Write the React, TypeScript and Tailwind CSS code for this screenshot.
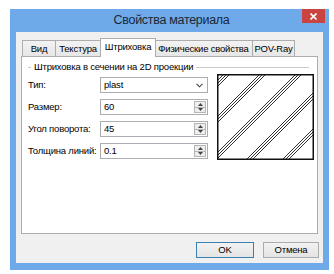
import React from "react";

const Hatch = () => {
  const groups = [10, 46, 82, 118, 154];
  const lines: number[] = [];
  groups.forEach((c) => {
    lines.push(c - 3, c, c + 3);
  });
  return (
    <svg width="97" height="86" viewBox="0 0 97 86" className="block">
      <rect x="0" y="0" width="97" height="86" fill="white" />
      {lines.map((c, i) => (
        <line key={i} x1={c} y1={0} x2={c - 86} y2={86} stroke="#1a1a1a" strokeWidth="0.9" />
      ))}
      <rect x="0.75" y="0.75" width="95.5" height="84.5" fill="none" stroke="#111" strokeWidth="1.5" />
    </svg>
  );
};

const txt = "text-[9.5px] tracking-[-0.2px] text-black leading-none whitespace-nowrap";

const Spin = ({ value }: { value: string }) => (
  <div className={"relative w-[108px] h-[16px] bg-white border border-[#abadb3] flex items-center pl-[3px] " + txt}>
    {value}
    <div className="absolute right-[1px] top-[1px] bottom-[1px] w-[12px] flex flex-col border border-[#b5b5b5] bg-[#eeeeee]">
      <div className="flex-1 flex items-center justify-center border-b border-[#b5b5b5]">
        <svg width="5" height="3" viewBox="0 0 5 3"><path d="M0 3 L2.5 0 L5 3 Z" fill="#444" /></svg>
      </div>
      <div className="flex-1 flex items-center justify-center">
        <svg width="5" height="3" viewBox="0 0 5 3"><path d="M0 0 L2.5 3 L5 0 Z" fill="#444" /></svg>
      </div>
    </div>
  </div>
);

const Label = ({ children }: { children: React.ReactNode }) => (
  <div className={"w-[72px] h-[16px] flex items-center " + txt}>{children}</div>
);

export default function App() {
  const tabs = [
    { t: "Вид", w: 34 },
    { t: "Текстура", w: 46 },
    { t: "Штриховка", w: 56, sel: true },
    { t: "Физические свойства", w: 99 },
    { t: "POV-Ray", w: 43 },
  ];
  return (
    <div className="w-[334px] h-[274px] bg-white overflow-hidden font-['Liberation_Sans',Arial,sans-serif]">
      <div className="ml-[10px] mt-[9px] w-[319px] h-[261px] bg-[#6eaaea] flex flex-col">
        <div className="relative h-[23px] flex items-center justify-center">
          <span className="text-[12.5px] tracking-[-0.3px] text-[#1b2735] leading-none ml-[4px] whitespace-nowrap">Свойства материала</span>
          <div className="absolute top-0 right-[4px] w-[23px] h-[14px] bg-[#c9443e] flex items-center justify-center">
            <svg width="7" height="7" viewBox="0 0 7 7">
              <path d="M0.5 0.5 L6.5 6.5 M6.5 0.5 L0.5 6.5" stroke="white" strokeWidth="1.6" />
            </svg>
          </div>
        </div>
        <div className="mx-[6px] mb-[7px] flex-1 bg-[#f0f0f0] flex flex-col px-[5px]">
          <div className="mt-[6px] h-[18px] flex items-end pl-[1px] relative z-10">
            {tabs.map((tab) =>
              tab.sel ? (
                <div
                  key={tab.t}
                  className={"h-[19px] mb-[-1px] bg-white border border-b-0 border-[#adadad] flex items-center justify-center -mx-[1px] relative z-10 " + txt}
                  style={{ width: tab.w }}
                >
                  <span className="-mt-[2px]">{tab.t}</span>
                </div>
              ) : (
                <div
                  key={tab.t}
                  className={"h-[16px] bg-gradient-to-b from-[#f3f3f3] to-[#e6e6e6] border border-b-0 border-[#adadad] -ml-[1px] first:ml-0 flex items-center justify-center " + txt}
                  style={{ width: tab.w }}
                >
                  {tab.t}
                </div>
              )
            )}
          </div>
          <div className="h-[178px] bg-white border border-[#adadad] flex flex-col pl-[6px] pr-[8px] pt-[3px]">
            <div className="h-[14px] flex items-center">
              <div className="w-[3px] h-px bg-[#c8c8c8]" />
              <span className={"px-[3px] " + txt}>Штриховка в сечении на 2D проекции</span>
              <div className="flex-1 h-px bg-[#c8c8c8]" />
            </div>
            <div className="flex items-start">
              <div className="flex flex-col gap-[6px] pt-[3px]">
                <div className="flex">
                  <Label>Тип:</Label>
                  <div className={"relative w-[108px] h-[16px] bg-white border border-[#acacac] flex items-center pl-[3px] " + txt}>
                    plast
                    <svg className="absolute right-[4px] top-[5px]" width="7" height="5" viewBox="0 0 7 5">
                      <path d="M0.5 0.8 L3.5 3.8 L6.5 0.8" stroke="#444" strokeWidth="1.1" fill="none" />
                    </svg>
                  </div>
                </div>
                <div className="flex">
                  <Label>Размер:</Label>
                  <Spin value="60" />
                </div>
                <div className="flex">
                  <Label>Угол поворота:</Label>
                  <Spin value="45" />
                </div>
                <div className="flex">
                  <Label>Толщина линий:</Label>
                  <Spin value="0.1" />
                </div>
              </div>
              <div className="ml-[9px]">
                <Hatch />
              </div>
            </div>
          </div>
          <div className="mt-[8px] h-[16px] flex justify-end gap-[9px] -mr-[1px]">
            <div className={"w-[58px] h-[16px] border border-[#3c7fb1] bg-gradient-to-b from-[#f2f2f2] to-[#e4e4e4] flex items-center justify-center " + txt}>
              OK
            </div>
            <div className={"w-[56px] h-[16px] border border-[#acacac] bg-gradient-to-b from-[#f2f2f2] to-[#e4e4e4] flex items-center justify-center " + txt}>
              Отмена
            </div>
          </div>
        </div>
      </div>
    </div>
  );
}
